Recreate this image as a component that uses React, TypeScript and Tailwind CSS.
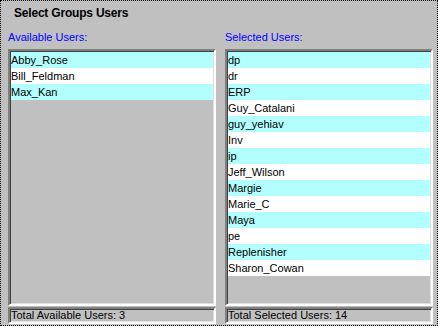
import { FC } from "react";

const availableUsers = ["Abby_Rose", "Bill_Feldman", "Max_Kan"];
const selectedUsers = [
  "dp",
  "dr",
  "ERP",
  "Guy_Catalani",
  "guy_yehiav",
  "Inv",
  "ip",
  "Jeff_Wilson",
  "Margie",
  "Marie_C",
  "Maya",
  "pe",
  "Replenisher",
  "Sharon_Cowan",
];

const sunken =
  "border-2 border-t-[#808080] border-l-[#808080] border-r-white border-b-white shadow-[inset_1px_1px_0_#404040,inset_-1px_-1px_0_#dfdfdf]";

interface UserListProps {
  label: string;
  users: string[];
  footer: string;
}

const UserList: FC<UserListProps> = ({ label, users, footer }) => (
  <div className="flex flex-col w-[208px]">
    <div className="h-[17px] text-[11px] leading-[17px] text-[#0000ff]">{label}</div>
    <div className={`${sunken} mt-[3px] h-[257px] p-px bg-[#c0c0c0]`}>
      {users.map((user, i) => (
        <div
          key={user}
          className={`h-4 leading-4 text-[11px] text-black ${
            i % 2 === 0 ? "bg-[#b3ffff]" : "bg-white"
          }`}
        >
          {user}
        </div>
      ))}
    </div>
    <div className={`${sunken} mt-px h-[17px] px-px text-[11px] leading-[13px] text-black`}>
      {footer}
    </div>
  </div>
);

const App: FC = () => {
  return (
    <div className="w-[440px] h-[328px] bg-white" style={{ fontFamily: '"Liberation Sans", Arial, sans-serif' }}>
      <div className="w-[438px] h-[326px] bg-[#c0c0c0] border border-dotted border-black">
        <h1 className="pl-[13px] pt-[5px] h-[28px] text-[12px] font-bold leading-[15px] tracking-[-0.2px] text-black">
          Select Groups Users
        </h1>
        <div className="flex gap-[9px] pl-[7px]">
          <UserList
            label="Available Users:"
            users={availableUsers}
            footer="Total Available Users: 3"
          />
          <UserList
            label="Selected Users:"
            users={selectedUsers}
            footer="Total Selected Users: 14"
          />
        </div>
      </div>
    </div>
  );
};

export default App;
